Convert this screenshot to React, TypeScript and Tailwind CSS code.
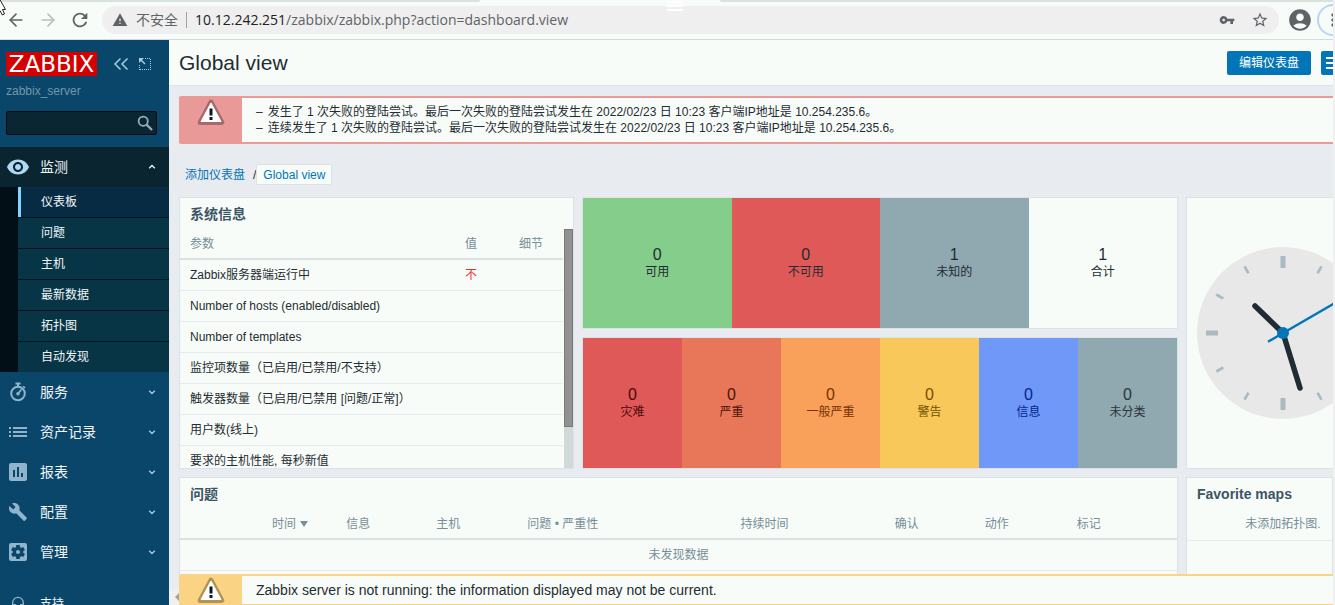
import type { ReactNode } from 'react';
import { ArrowLeft, ArrowRight } from 'lucide-react';
import {
  MdAccountCircle,
  MdHeadset,
  MdInsertChart,
  MdMoreVert,
  MdRefresh,
  MdRemoveRedEye,
  MdSettingsApplications,
  MdStarBorder,
  MdVpnKey,
  MdWarning,
} from 'react-icons/md';

const StopwatchIcon = () => (
  <svg width="18" height="20" viewBox="0 0 18 20" fill="none" stroke="currentColor">
    <circle cx="9" cy="11.5" r="6.8" strokeWidth="2" />
    <path d="M6.5 1.5H11.5M9 1.5V4" strokeWidth="2" />
    <path d="M14.2 4.2 16 6" strokeWidth="1.6" />
    <path d="M9 11.5 12 8" strokeWidth="1.8" strokeLinecap="round" />
    <circle cx="9" cy="11.8" r="1.8" fill="currentColor" stroke="none" />
  </svg>
);

const ListIcon = () => (
  <svg width="18" height="12" viewBox="0 0 18 12" fill="currentColor">
    <path d="M0 1H2V3H0ZM0 5H2V7H0ZM0 9H2V11H0ZM4 1H18V3H4ZM4 5H18V7H4ZM4 9H18V11H4Z" />
  </svg>
);

const WrenchIcon = () => (
  <svg width="18" height="18" viewBox="1 1 22 22" fill="currentColor">
    <path d="M22.7 19 13.6 9.9C14.5 7.6 14 4.9 12.1 3 10.1 1 7.1.6 4.7 1.7L9 6 6 9 1.6 4.7C.4 7.1.9 10.1 2.9 12.1c1.9 1.9 4.6 2.4 6.9 1.5l9.1 9.1c.4.4 1 .4 1.4 0l2.3-2.3c.5-.4.5-1.1.1-1.4Z" />
  </svg>
);

const subMenu = ['仪表板', '问题', '主机', '最新数据', '拓扑图', '自动发现'];

const menu = [
  { label: '服务', icon: <StopwatchIcon /> },
  { label: '资产记录', icon: <ListIcon /> },
  { label: '报表', icon: <MdInsertChart size={24} /> },
  { label: '配置', icon: <WrenchIcon /> },
  { label: '管理', icon: <MdSettingsApplications size={24} /> },
];

const systemInfo = [
  { name: 'Zabbix服务器端运行中', value: '不' },
  { name: 'Number of hosts (enabled/disabled)', value: '' },
  { name: 'Number of templates', value: '' },
  { name: '监控项数量（已启用/已禁用/不支持）', value: '' },
  { name: '触发器数量（已启用/已禁用 [问题/正常]）', value: '' },
  { name: '用户数(线上)', value: '' },
  { name: '要求的主机性能, 每秒新值', value: '' },
];

const hosts = [
  { count: 0, label: '可用', style: 'bg-[#84cd8a]' },
  { count: 0, label: '不可用', style: 'bg-[#e05959]' },
  { count: 1, label: '未知的', style: 'bg-[#90a8af]' },
  { count: 1, label: '合计', style: '' },
];

const severities = [
  { count: 0, label: '灾难', style: 'bg-[#e05959] text-[#4a0808]' },
  { count: 0, label: '严重', style: 'bg-[#e87658] text-[#4c1406]' },
  { count: 0, label: '一般严重', style: 'bg-[#f9a05a] text-[#733100]' },
  { count: 0, label: '警告', style: 'bg-[#f8c95a] text-[#734d00]' },
  { count: 0, label: '信息', style: 'bg-[#7098f8] text-[#00268e]' },
  { count: 0, label: '未分类', style: 'bg-[#90a8af] text-[#2a353a]' },
];

const problemColumns = [
  { label: '', width: 'w-[86px]' },
  { label: '时间', width: 'w-[74px]' },
  { label: '信息', width: 'w-[90px]' },
  { label: '主机', width: 'w-[91px]' },
  { label: '问题 • 严重性', width: 'w-[213px]' },
  { label: '持续时间', width: 'w-[154px]' },
  { label: '确认', width: 'w-[90px]' },
  { label: '动作', width: 'w-[92px]' },
  { label: '标记', width: 'w-[106px]' },
];

const failedLogins = [
  '发生了 1 次失败的登陆尝试。最后一次失败的登陆尝试发生在 2022/02/23 日 10:23 客户端IP地址是 10.254.235.6。',
  '连续发生了 1 次失败的登陆尝试。最后一次失败的登陆尝试发生在 2022/02/23 日 10:23 客户端IP地址是 10.254.235.6。',
];

const Chevron = ({ up = false }: { up?: boolean }) => (
  <svg width="8" height="6" viewBox="0 0 8 6" fill="none" stroke="currentColor" strokeWidth="1.3">
    <path d={up ? 'M1.2 4.3 4 1.5 6.8 4.3' : 'M1.2 1.7 4 4.5 6.8 1.7'} />
  </svg>
);

const AlertIcon = ({ className }: { className: string }) => (
  <svg width="28" height="27" viewBox="0 0 28 27" className={className}>
    <path
      d="M14 3.2 24.8 23.4H3.2Z"
      fill="currentColor"
      stroke="currentColor"
      strokeWidth="5"
      strokeLinejoin="round"
    />
    <path d="M14 4 24 22.5H4Z" fill="#fff" stroke="#fff" strokeWidth="1" strokeLinejoin="round" />
    <path d="M12.5 9.5h3v7h-3zM12.5 18h3v3h-3z" fill="#0b1a1e" />
  </svg>
);

const BrowserBar = () => (
  <header className="relative flex h-10 shrink-0 items-center border-b border-[#d5dcdf] bg-[#f8fcf8] text-[#5f6368]">
    <div className="absolute inset-x-0 top-0 flex h-[2px] justify-between">
      <span className="w-[36%] rounded-br bg-[#dae2e1]" />
      <span className="w-[46%] rounded-bl bg-[#dae2e1]" />
    </div>
    <div className="absolute top-0 left-1/2 flex w-4 flex-col gap-[2px] pt-px">
      <span className="h-[2px] bg-white" />
      <span className="h-[2px] bg-white" />
      <span className="h-[2px] bg-white" />
    </div>
    <button aria-label="Back" className="ml-1.5">
      <ArrowLeft size={20} />
    </button>
    <button aria-label="Forward" className="ml-3 text-[#babdc0]">
      <ArrowRight size={20} />
    </button>
    <button aria-label="Reload" className="ml-[11px]">
      <MdRefresh size={22} />
    </button>
    <div className="ml-[11px] flex h-7 flex-1 items-center rounded-full bg-[#efefef] px-2.5 font-['Open_Sans','Noto_Sans_CJK_SC',sans-serif] text-sm">
      <MdWarning size={16} />
      <span className="ml-2">不安全</span>
      <span className="mx-2 h-4 w-px bg-[#a0a4a6]" />
      <span className="flex-1">
        <span className="text-[#202124]">10.12.242.251</span>/zabbix/zabbix.php?action=dashboard.view
      </span>
      <button aria-label="Passwords">
        <MdVpnKey size={16} />
      </button>
      <button aria-label="Bookmark" className="ml-4">
        <MdStarBorder size={18} />
      </button>
    </div>
    <button aria-label="Profile" className="ml-2">
      <MdAccountCircle size={26} />
    </button>
    <div className="w-5 overflow-hidden pl-1">
      <button
        aria-label="Menu"
        className="flex size-8 items-center justify-center rounded-full border-2 border-[#b8d4fa]"
      >
        <MdMoreVert size={20} />
      </button>
    </div>
    <svg width="7" height="16" viewBox="0 0 7 16" className="absolute top-0 left-0">
      <path d="M-1-2 5.5 9.5H2.5L4.5 14 2.3 15 0 10.5" fill="#fff" stroke="#222" strokeWidth="1" />
    </svg>
  </header>
);

const Sidebar = () => (
  <aside className="flex w-[169px] shrink-0 flex-col overflow-hidden bg-[#0a466a] text-sm text-[#f0f5f8]">
    <div className="flex items-center px-1.5 pt-3 text-[#a9cbe0]">
      <span className="flex h-6 w-[91px] items-center justify-center bg-[#d40000] font-['DejaVu_Sans',sans-serif] text-[23px] leading-6 text-white">
        ZABBIX
      </span>
      <button aria-label="Collapse" className="ml-4">
        <svg width="16" height="14" viewBox="0 0 16 14" fill="none" stroke="currentColor" strokeWidth="1.5">
          <path d="M7.5 1.5 2 7 7.5 12.5M14.5 1.5 9 7 14.5 12.5" />
        </svg>
      </button>
      <button aria-label="Hide" className="ml-2">
        <svg width="14" height="14" viewBox="0 0 14 14" fill="none" stroke="currentColor">
          <path d="M8 1.5H14M13.5 2V14M3 12.5H13M2.5 8V13" strokeDasharray="1 1" />
          <path d="M2 1H7L2 6Z" fill="currentColor" stroke="none" />
          <path d="M3.5 2.5 8 7" strokeWidth="1.5" />
        </svg>
      </button>
    </div>
    <div className="px-1.5 pt-[7px] text-xs leading-4 text-[#7396aa]">zabbix_server</div>
    <div className="relative mx-1.5 mt-3 mr-3">
      <input
        type="text"
        aria-label="Search"
        className="block h-6 w-full rounded-xs border border-[#010d14] bg-[#0a2632] px-2 text-xs outline-none"
      />
      <button aria-label="Find" className="absolute top-1 right-1 text-[#90b0c0]">
        <svg width="16" height="16" viewBox="0 0 16 16" fill="none" stroke="currentColor">
          <circle cx="6.2" cy="6.2" r="4.6" strokeWidth="1.8" />
          <path d="M9.6 9.6 15 15" strokeWidth="2.2" />
        </svg>
      </button>
    </div>
    <nav className="mt-3">
      <a href="#monitoring" className="flex h-10 items-center bg-[#0a2430] pr-3">
        <MdRemoveRedEye size={24} className="ml-1.5 text-[#b0d8f0]" />
        <span className="ml-2.5 flex-1">监测</span>
        <span className="mr-px">
          <Chevron up />
        </span>
      </a>
      <ul className="border-l-18 border-[#020f17] bg-[#083546] text-xs">
        {subMenu.map((item, i) => (
          <li key={item} className={i > 0 ? 'border-t border-[#02151f]' : ''}>
            <a
              href={`#${item}`}
              className={
                i === 0
                  ? 'flex h-[30px] items-center border-l-3 border-[#86d3ff] bg-[#082b44] pl-5'
                  : 'flex h-[30px] items-center pl-[23px]'
              }
            >
              {item}
            </a>
          </li>
        ))}
      </ul>
      {menu.map((item) => (
        <a key={item.label} href={`#${item.label}`} className="flex h-10 items-center pr-3">
          <span className="ml-1.5 flex w-6 justify-center text-[#8fb4cc]">{item.icon}</span>
          <span className="ml-2.5 flex-1">{item.label}</span>
          <span className="mr-px text-[#a9cbe0]">
            <Chevron />
          </span>
        </a>
      ))}
      <a href="#support" className="mt-4 flex h-8 items-center text-xs">
        <span className="ml-1.5 flex w-6 justify-center text-[#8fb4cc]">
          <MdHeadset size={16} />
        </span>
        <span className="ml-2.5">支持</span>
      </a>
    </nav>
  </aside>
);

const Panel = ({ title, children }: { title: string; children: ReactNode }) => (
  <section className="flex h-full flex-col overflow-hidden border border-[#dbe3e4] bg-[#f8fcf8]">
    <h2 className="px-2.5 pt-1.5 pb-[5px] text-sm font-bold text-[#3c5563]">{title}</h2>
    {children}
  </section>
);

const Totals = ({ items }: { items: typeof hosts }) => (
  <div className="flex h-[132px] border border-[#dbe3e4] bg-[#f8fcf8]">
    {items.map((item) => (
      <div key={item.label} className={`flex flex-1 flex-col items-center justify-center pt-0.5 ${item.style}`}>
        <span className="text-base leading-4">{item.count}</span>
        <span className="leading-[18px]">{item.label}</span>
      </div>
    ))}
  </div>
);

const SystemInfo = () => (
  <Panel title="系统信息">
    <div className="flex min-h-0 flex-1">
      <table className="mr-px w-full table-fixed self-start">
        <thead>
          <tr className="h-[30px] border-b-2 border-[#dbe1e2] text-left text-[#768d99]">
            <th className="pl-2.5 font-normal">参数</th>
            <th className="w-[54px] font-normal">值</th>
            <th className="w-11 font-normal">细节</th>
          </tr>
        </thead>
        <tbody>
          {systemInfo.map((row) => (
            <tr key={row.name} className="h-[31px] border-b border-[#e7eaef]">
              <td className="pl-2.5">{row.name}</td>
              <td className="text-[#e33734]">{row.value}</td>
              <td />
            </tr>
          ))}
        </tbody>
      </table>
      <div className="w-[9px] shrink-0 bg-[#d2dad9]">
        <div className="h-[83%] border border-[#7a7a7a] bg-[#919191]" />
      </div>
    </div>
  </Panel>
);

const Clock = () => (
  <svg width="172" height="172" viewBox="-86 -86 172 172" className="shrink-0">
    <circle r="86" fill="#e8e8e8" />
    {Array.from({ length: 12 }, (_, i) => (
      <path
        key={i}
        d={i % 3 === 0 ? 'M0-77V-65' : 'M0-77V-69'}
        stroke="#a9bac2"
        strokeWidth={i % 3 === 0 ? 5 : 2.6}
        transform={`rotate(${i * 30})`}
      />
    ))}
    <path d="M0 0-28-27M0 0 17 55" stroke="#1f2c33" strokeWidth="5.5" strokeLinecap="round" />
    <path d="M-15 8.7 66-38" stroke="#0275b8" strokeWidth="2.4" />
    <circle r="6" fill="#0275b8" />
  </svg>
);

const Problems = () => (
  <Panel title="问题">
    <table className="w-full table-fixed text-[#768d99]">
      <thead>
        <tr className="h-[30px] border-b-2 border-[#dbe1e2] text-left">
          {problemColumns.map((col) => (
            <th key={col.label} className={`pl-1.5 font-normal ${col.width}`}>
              <span className="flex items-center gap-1">
                {col.label}
                {col.label === '时间' && (
                  <svg width="8" height="6" viewBox="0 0 8 6" fill="currentColor">
                    <path d="M0 0H8L4 6Z" />
                  </svg>
                )}
              </span>
            </th>
          ))}
        </tr>
      </thead>
      <tbody>
        <tr className="h-[31px] border-b border-[#e7eaef]">
          <td colSpan={problemColumns.length} className="text-center">
            未发现数据
          </td>
        </tr>
      </tbody>
    </table>
  </Panel>
);

const Dashboard = () => (
  <main className="min-w-0 flex-1 overflow-hidden">
    <div className="flex h-[46px] items-center border-b border-[#dfe4e7] bg-[#f8fcf8] pl-2.5">
      <h1 className="flex-1 text-[21px]">Global view</h1>
      <button className="h-6 w-[84px] rounded-xs bg-[#0275b8] text-white">编辑仪表盘</button>
      <button
        aria-label="Actions"
        className="ml-2.5 flex h-6 w-3 items-center overflow-hidden rounded-l-xs bg-[#0275b8] pl-[5px] text-white"
      >
        <svg width="14" height="12" viewBox="0 0 14 12" fill="currentColor" className="shrink-0">
          <path d="M0 0H14V2H0ZM0 5H14V7H0ZM0 10H14V12H0Z" />
        </svg>
      </button>
    </div>

    <div className="pt-2.5 pl-2.5">
      <div className="flex rounded-l-xs border-y-2 border-[#ea9999] bg-[#ea9999]">
        <div className="w-[63px] shrink-0">
          <AlertIcon className="mx-auto mt-px text-[#a46b6b]" />
        </div>
        <ul className="flex-1 bg-[#f8fcf8] py-1.5 pl-3.5 leading-4">
          {failedLogins.map((text) => (
            <li key={text} className="flex gap-[5px]">
              <span>–</span>
              {text}
            </li>
          ))}
        </ul>
      </div>

      <div className="mt-5 mb-3 flex items-center pl-1.5">
        <a href="#dashboards" className="text-[#0275b8]">
          添加仪表盘
        </a>
        <span className="ml-2">/</span>
        <a
          href="#global"
          className="flex h-[21px] items-center rounded-xs border border-[#dbe3e4] bg-[#f8fcf8] px-1.5 text-[#0275b8]"
        >
          Global view
        </a>
      </div>

      <div className="grid grid-cols-[395fr_596fr_147fr] gap-2">
        <div className="h-[272px]">
          <SystemInfo />
        </div>
        <div className="flex flex-col gap-2">
          <Totals items={hosts} />
          <Totals items={severities} />
        </div>
        <div className="flex items-center overflow-hidden border border-r-0 border-[#dbe3e4] bg-[#f8fcf8]">
          <div className="flex w-48 shrink-0 justify-center">
            <Clock />
          </div>
        </div>
        <div className="col-span-2 h-36">
          <Problems />
        </div>
        <div className="h-36 overflow-hidden">
          <Panel title="Favorite maps">
            <p className="w-48 border-b border-[#e7eaef] py-1.5 text-center leading-[19px] text-[#768d99]">
              未添加拓扑图.
            </p>
          </Panel>
        </div>
      </div>
    </div>
  </main>
);

export default function App() {
  return (
    <div className="flex h-screen flex-col overflow-hidden border-r-2 border-[#f0f0f0] bg-[#e8ebef] font-['Liberation_Sans','Noto_Sans_CJK_SC',sans-serif] text-xs text-[#1f2c33]">
      <BrowserBar />
      <div className="relative flex min-h-0 flex-1">
        <Sidebar />
        <Dashboard />
        <div className="absolute bottom-0 left-[169px] flex h-4 w-2.5 items-center justify-end bg-[#f0f0f0]">
          <svg width="4" height="8" viewBox="0 0 4 8" fill="#a3a3a3">
            <path d="M4 0V8L0 4Z" />
          </svg>
        </div>
        <div className="absolute right-0 bottom-0 left-[179px] flex h-[31px] rounded-tl-xs border-t-2 border-b border-[#fad385] bg-[#fad385]">
          <div className="w-[63px] shrink-0">
            <AlertIcon className="mx-auto mt-px text-[#b09455]" />
          </div>
          <p className="flex flex-1 items-center bg-[#f8fcf8] pl-3.5 text-sm">
            Zabbix server is not running: the information displayed may not be current.
          </p>
        </div>
      </div>
    </div>
  );
}
